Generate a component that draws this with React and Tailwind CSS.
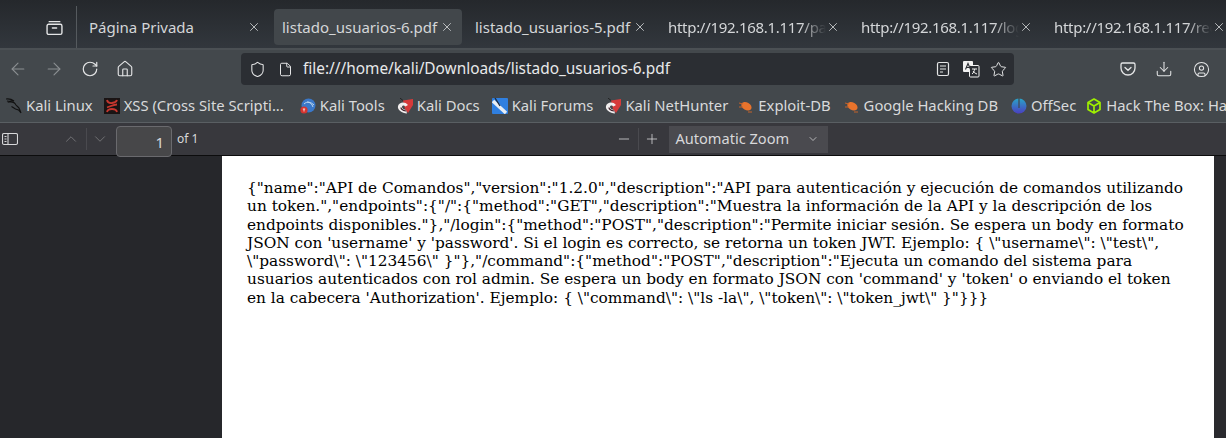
import { X, ArrowLeft, ArrowRight, RotateCw, House, Shield, File, Star, Download, CircleUser, ChevronUp, ChevronDown, Minus, Plus } from "lucide-react";

const TABS = [
  { title: "Página Privada" },
  { title: "listado_usuarios-6.pdf", active: true },
  { title: "listado_usuarios-5.pdf" },
  { title: "http://192.168.1.117/pa", fade: true },
  { title: "http://192.168.1.117/log", fade: true },
  { title: "http://192.168.1.117/req", fade: true },
];

const PAGE_LINES = [
  `{"name":"API de Comandos","version":"1.2.0","description":"API para autenticación y ejecución de comandos utilizando`,
  `un token.","endpoints":{"/":{"method":"GET","description":"Muestra la información de la API y la descripción de los`,
  `endpoints disponibles."},"/login":{"method":"POST","description":"Permite iniciar sesión. Se espera un body en formato`,
  `JSON con 'username' y 'password'. Si el login es correcto, se retorna un token JWT. Ejemplo: { \\"username\\": \\"test\\",`,
  `\\"password\\": \\"123456\\" }"},"/command":{"method":"POST","description":"Ejecuta un comando del sistema para`,
  `usuarios autenticados con rol admin. Se espera un body en formato JSON con 'command' y 'token' o enviando el token`,
  `en la cabecera 'Authorization'. Ejemplo: { \\"command\\": \\"ls -la\\", \\"token\\": \\"token_jwt\\" }"}}}`,
];

function Favicon({ kind }) {
  if (kind === "dragon") return (
    <svg viewBox="0 0 16 16" className="h-4 w-4 shrink-0" fill="none" stroke="#111" strokeWidth="1.1">
      <path d="M0 1c3-.5 6 .5 8 2-2-.5-4 0-5 1 3-.5 6 1 7 3 1 1.500 3 2 3.500 4l1.500 4-2.500-3-3-1-4-2.500" />
      <path d="M1 3l3 .5" />
    </svg>
  );
  if (kind === "xss") return (
    <svg viewBox="0 0 16 16" className="h-4 w-4 shrink-0">
      <rect width="16" height="16" fill="#1a1414" />
      <path d="M3 2c1 5 9 3 10 0M3 14c1-4 9-4 10 0M3 9.500c3-1 7-3 10-3" fill="none" stroke="#c5362e" strokeWidth="1.800" />
    </svg>
  );
  if (kind === "tools") return (
    <svg viewBox="0 0 16 16" className="h-4 w-4 shrink-0">
      <circle cx="8.500" cy="7.500" r="7" fill="#3a78c9" />
      <path d="M4 6c3-3 7-2 10 1M7 4c3 0 5 2 6 5" fill="none" stroke="#bcd6ef" strokeWidth="1" />
      <circle cx="4" cy="12" r="3.600" fill="#d5342f" />
      <path d="M2.800 11h2.400M4 11v2.500" stroke="#fff" strokeWidth=".8" />
    </svg>
  );
  if (kind === "hunter") return (
    <svg viewBox="0 0 16 16" className="h-4 w-4 shrink-0">
      <path d="M6 2.500L16 1v6l-5 8-3-4z" fill="#d63a3a" />
      <path d="M1 8c1-4 7-5 10-1l-2.500 1.500C7 7 5 7.500 5 9c0 1.500 2 2.500 4 3l1 3.500C5 15 0 12 1 8z" fill="#f1eeee" />
      <path d="M4 9.500c0 2 2.500 3 5 3.500" fill="none" stroke="#3a1a24" strokeWidth="1.200" />
      <path d="M3 0l3 2.500" stroke="#222" strokeWidth="1" />
    </svg>
  );
  if (kind === "forums") return (
    <svg viewBox="0 0 16 16" className="h-4 w-4 shrink-0">
      <rect width="16" height="16" rx="1" fill="#2f7fe0" />
      <path d="M1 3l13 12" stroke="#e8eef5" strokeWidth="3.400" />
      <path d="M3 0l5 8" stroke="#1d2a3c" strokeWidth="1.300" />
    </svg>
  );
  if (kind === "bug") return (
    <svg viewBox="0 0 16 16" className="h-4 w-4 shrink-0">
      <ellipse cx="8.500" cy="8" rx="5.500" ry="3.800" transform="rotate(30 8 8)" fill="#e8732c" />
      <path d="M1 5l4 1M1 9h4M10 14l4 0" stroke="#c4622a" strokeWidth="1" />
    </svg>
  );
  if (kind === "offsec") return (
    <svg viewBox="0 0 16 16" className="h-4 w-4 shrink-0">
      <defs>
        <linearGradient id="off" x1="0" y1="0" x2="0" y2="1">
          <stop offset="0" stopColor="#2aa3c7" />
          <stop offset="1" stopColor="#4a3fc0" />
        </linearGradient>
      </defs>
      <circle cx="8" cy="8" r="7.500" fill="url(#off)" />
      <rect x="7.400" y="0" width="1.200" height="10" fill="#43484c" />
    </svg>
  );
  if (kind === "htb") return (
    <svg viewBox="0 0 16 16" className="h-4 w-4 shrink-0" fill="none" stroke="#9fef00" strokeWidth="1.700" strokeLinejoin="round">
      <path d="M8 1l6 3.500v7L8 15l-6-3.500v-7zM2 4.500L8 8l6-3.500M8 8v7" />
    </svg>
  );
  return null;
}

const BOOKMARKS = [
  { label: "Kali Linux", icon: "dragon", gap: "mr-[11px]" },
  { label: "XSS (Cross Site Scripti...", icon: "xss", gap: "mr-[16px]" },
  { label: "Kali Tools", icon: "tools", gap: "mr-[12px]" },
  { label: "Kali Docs", icon: "hunter", gap: "mr-[12px]" },
  { label: "Kali Forums", icon: "forums", gap: "mr-[12px]" },
  { label: "Kali NetHunter", icon: "hunter", gap: "mr-[10px]" },
  { label: "Exploit-DB", icon: "bug", gap: "mr-[13px]" },
  { label: "Google Hacking DB", icon: "bug", gap: "mr-[13px]" },
  { label: "OffSec", icon: "offsec", gap: "mr-[10px]" },
  { label: "Hack The Box: Hacking Labs", icon: "htb", gap: "mr-0" },
];

function Tab({ title, active, fade }) {
  return (
    <div className={`mr-[5px] flex h-9 w-[188px] shrink-0 items-center pl-[8px] pr-[8px] ${active ? "rounded bg-[#42474b]" : ""}`}>
      <span className={`flex-1 overflow-hidden whitespace-nowrap text-[15px] text-[#d4d6d8] ${fade ? "tracking-[-0.3px] [mask-image:linear-gradient(to_right,black_84%,transparent_100%)]" : ""}`}>
        {title}
      </span>
      <X size={14} strokeWidth={1.400} className="shrink-0 text-[#d4d6d8]" />
    </div>
  );
}

function TabBar() {
  return (
    <div className="h-[50px] shrink-0 border-b-2 border-[#4b5054] bg-gradient-to-b from-[#25282c] to-[#32373d]">
      <div className="flex h-full items-center overflow-hidden pt-[6px]">
        <div className="flex h-full w-[77px] shrink-0 items-center justify-end border-r border-[#555a5e] pr-[13px]">
          <svg viewBox="0 0 16 16" className="h-[17px] w-[17px]" fill="none" stroke="#e4e5e6" strokeWidth="1.300">
            <rect x="1" y="5" width="14" height="9.500" rx="1.500" />
            <path d="M3 2.500h10M6 8.500h4" strokeLinecap="round" />
          </svg>
        </div>
        <div className="flex items-center pl-[4px]">
          {TABS.map((t) => <Tab key={t.title} {...t} />)}
        </div>
      </div>
    </div>
  );
}

function NavBar() {
  return (
    <div className="flex h-[36px] shrink-0 items-center bg-[#43484c] pt-[2px] text-[#e4e5e6]">
      <div className="flex w-[241px] shrink-0 items-center pl-[8px]">
        <ArrowLeft size={20} strokeWidth={1.300} className="text-[#8b8f92]" />
        <ArrowRight size={20} strokeWidth={1.300} className="ml-[16px] text-[#8b8f92]" />
        <RotateCw size={18} strokeWidth={1.600} className="ml-[17px]" />
        <House size={18} strokeWidth={1.500} className="ml-[17px]" />
      </div>
      <div className="flex h-[32px] w-[773px] shrink-0 items-center rounded bg-[#2b2e33] pl-[8px] pr-[7px]">
        <Shield size={17} strokeWidth={1.500} />
        <File size={15} strokeWidth={1.600} className="ml-[12px]" />
        <span className="ml-[10px] flex-1 text-[15.4px] text-[#e8e9ea]">file:///home/kali/Downloads/listado_usuarios-6.pdf</span>
        <svg viewBox="0 0 16 16" className="h-[16px] w-[16px]" fill="none" stroke="currentColor" strokeWidth="1.200">
          <rect x="2.500" y="1.500" width="11" height="13" rx="1.500" />
          <path d="M5 5h6M5 8h6M5 11h3" />
        </svg>
        <svg viewBox="0 0 18 18" className="ml-[11px] h-[18px] w-[18px]">
          <rect x="1" y="1" width="10" height="11" rx="1" fill="#f2f2f2" />
          <rect x="7.500" y="5.500" width="9.500" height="11.500" rx="1" fill="#2b2e33" stroke="#f2f2f2" strokeWidth="1" />
          <path d="M3.500 9.500L6 3.500l2.500 6M4.500 7.500h3" fill="none" stroke="#2b2e33" strokeWidth="1.100" />
          <path d="M10 9h5M12.500 9c0 2-1 4-2.500 5M11 11c1 1.500 2.500 2.500 4 3" fill="none" stroke="#f2f2f2" strokeWidth="1" />
        </svg>
        <Star size={17} strokeWidth={1.400} className="ml-[10px]" />
      </div>
      <div className="ml-auto flex items-center pr-[16px]">
        <svg viewBox="0 0 16 16" className="h-[16px] w-[16px]" fill="none" stroke="currentColor" strokeWidth="1.300">
          <path d="M2.500 2h11A1.500 1.500 0 0 1 15 3.500V7a7 7 0 0 1-14 0V3.500A1.500 1.500 0 0 1 2.500 2z" />
          <path d="M5 6.500l3 2.800 3-2.800" strokeLinecap="round" />
        </svg>
        <Download size={18} strokeWidth={1.400} className="ml-[19px]" />
        <CircleUser size={17} strokeWidth={1.500} className="ml-[20px]" />
      </div>
    </div>
  );
}

function BookmarksBar() {
  return (
    <div className="flex h-[37px] shrink-0 items-center overflow-hidden border-b border-[#5a5f63] bg-[#43484c] pl-[6px] pt-[3px] text-[14.8px] text-[#d9dadb]">
      {BOOKMARKS.map((b) => (
        <div key={b.label} className={`flex shrink-0 items-center gap-[4px] whitespace-nowrap ${b.gap}`}>
          <Favicon kind={b.icon} />
          <span>{b.label}</span>
        </div>
      ))}
    </div>
  );
}

function PdfToolbar() {
  return (
    <div className="relative z-10 flex h-[33px] shrink-0 items-center border-b border-[#0c0c0d] bg-[#38383d] text-[#d8d8da]">
      <svg viewBox="0 0 16 16" className="ml-[2px] h-4 w-4" fill="none" stroke="currentColor" strokeWidth="1.100">
        <rect x="0.500" y="2.500" width="15" height="11" rx="1.500" />
        <path d="M6 2.500v11M2.500 5.500h2M2.500 8h2M2.500 10.500h2" />
      </svg>
      <ChevronUp size={18} strokeWidth={1.200} className="ml-[44px] text-[#77777b]" />
      <div className="ml-[6px] mr-[4px] h-[22px] w-px bg-[#4a4a4f]" />
      <ChevronDown size={18} strokeWidth={1.200} className="text-[#77777b]" />
      <div className="ml-[7px] mt-[5px] flex h-[31px] w-[56px] items-end justify-end rounded-sm border border-[#6a6a6e] bg-[#474749] pb-[3px] pr-[7px] text-[15px]">1</div>
      <span className="ml-[5px] text-[12px]">of 1</span>
      <Minus size={16} strokeWidth={1.200} className="ml-[418px]" />
      <div className="ml-[6px] mr-[5px] h-[22px] w-px bg-[#4a4a4f]" />
      <Plus size={16} strokeWidth={1.200} />
      <div className="ml-[9px] flex h-[27px] w-[159px] items-center justify-between bg-[#4a4a4f] pl-[6px] pr-[9px] text-[14.6px]">
        <span>Automatic Zoom</span>
        <ChevronDown size={12} strokeWidth={1.500} />
      </div>
    </div>
  );
}

export default function App() {
  return (
    <div className="flex h-[438px] w-[1226px] flex-col overflow-hidden font-['Noto_Sans',sans-serif]">
      <TabBar />
      <NavBar />
      <BookmarksBar />
      <PdfToolbar />
      <div className="flex min-h-0 flex-1 bg-[#2a2a2e]">
        <div className="w-[222px] shrink-0 bg-[#26272b]" />
        <div className="w-[992px] shrink-0 bg-white pl-[25px] pt-[23px] font-['DejaVu_Serif',serif] text-[15.35px] leading-[18.3px] text-black">
          {PAGE_LINES.map((l) => <div key={l} className="whitespace-nowrap">{l}</div>)}
        </div>
      </div>
    </div>
  );
}
